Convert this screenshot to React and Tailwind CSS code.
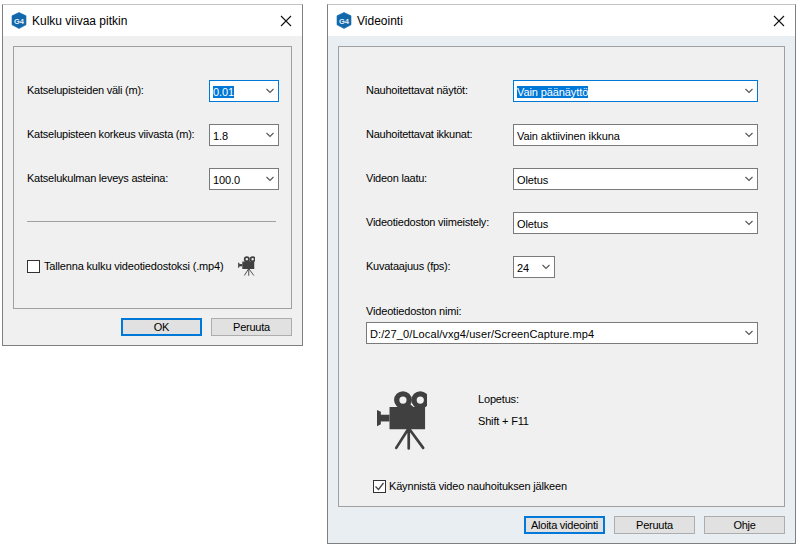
const font = { fontFamily: '"Liberation Sans", Arial, sans-serif' };

function G4Icon() {
  return (
    <svg width="16" height="17" viewBox="0 0 16 17" className="shrink-0">
      <polygon points="8,0.5 15,3.8 15,12.8 8,16.5 1,12.8 1,3.8" fill="#1268ab" stroke="#1268ab" strokeWidth="0.6" strokeLinejoin="round" />
      <text x="8" y="11.5" textAnchor="middle" fontSize="7.5" fontWeight="700" fill="#e8eef2" fontFamily="Liberation Sans">G4</text>
    </svg>
  );
}

function CloseIcon() {
  return (
    <svg width="12" height="12" viewBox="0 0 12 12" fill="none" stroke="#111" strokeWidth="1.1">
      <path d="M1 1l10 10M11 1L1 11" />
    </svg>
  );
}

function Chevron() {
  return (
    <svg width="8" height="6" viewBox="0 0 8 6" fill="none" stroke="#555" strokeWidth="1.1" className="shrink-0">
      <path d="M0.5 1l3.5 3.5L7.5 1" />
    </svg>
  );
}

function Camera({ className }) {
  return (
    <svg viewBox="17 19 52 62" className={className} fill="#404040">
      <circle cx="44" cy="28.7" r="6.5" fill="none" stroke="#404040" strokeWidth="5.5" />
      <circle cx="62" cy="28.7" r="6.5" fill="none" stroke="#404040" strokeWidth="5.5" />
      <path d="M30 36h18l3.5-3 3.5 3h12v23H30z" />
      <path d="M20 44h10v7H20z" />
      <path d="M17 39l4 2v13l-4 2z" />
      <path d="M50 58L37 78.5M50 58v21M50 58l15 20.5" fill="none" stroke="#404040" strokeWidth="2.8" strokeLinecap="round" />
    </svg>
  );
}

function Combo({ value, width, focused, selected, valueClass }) {
  return (
    <div className={`flex h-[22px] ${width} shrink-0 items-center border bg-white pl-[3px] pr-[4px] ${focused ? "border-[#0078d7]" : "border-[#7a7a7a]"}`}>
      <span className={`flex-1 truncate pt-[1px] text-[11px] leading-[16px] ${valueClass || "tracking-[-0.1px]"}`}>
        <span className={selected ? "bg-[#0078d7] text-white" : ""}>{value}</span>
      </span>
      <Chevron />
    </div>
  );
}

function Row({ label, labelClass, className, children }) {
  return (
    <div className={`flex items-center ${className || ""}`}>
      <span className={`-mt-[2px] whitespace-nowrap text-[11px] leading-[16px] tracking-[-0.24px] ${labelClass || ""}`}>{label}</span>
      {children}
    </div>
  );
}

function Btn({ label, primary }) {
  return (
    <div className={`flex h-[18px] w-[81px] items-center justify-center whitespace-nowrap text-[11px] leading-none tracking-[-0.25px] ${primary ? "border-2 border-[#0078d7] bg-[#e1e1e1]" : "border border-[#adadad] bg-[#e1e1e1]"}`}>
      {label}
    </div>
  );
}

function Dialog({ title, className, frameClass, children, buttons }) {
  return (
    <div className={`absolute flex flex-col border border-[#7f7f7f] border-t-[#c4c4c4] ${frameClass} ${className}`}>
      <div className="flex h-[31px] shrink-0 items-center bg-white pl-[8px] pr-[10px]">
        <G4Icon />
        <span className="ml-[5px] flex-1 text-[12px]">{title}</span>
        <CloseIcon />
      </div>
      <div className="flex min-h-0 flex-1 flex-col px-[10px] pt-[10px]">
        <div className="min-h-0 flex-1 border border-[#a0a0a0] bg-[#f0f0f0]">{children}</div>
        <div className="flex h-[36px] shrink-0 items-center justify-end gap-[9px]">
          {buttons.map((b, i) => (
            <Btn key={b} label={b} primary={i === 0} />
          ))}
        </div>
      </div>
    </div>
  );
}

export default function App() {
  return (
    <div className="relative h-[547px] w-[799px] overflow-hidden bg-white text-black" style={font}>
      <Dialog title="Kulku viivaa pitkin" className="left-[2px] top-[4px] h-[342px] w-[301px]" frameClass="bg-[#f0f0f0]" buttons={["OK", "Peruuta"]}>
        <div className="flex flex-col pl-[13px] pr-[12px] pt-[33px]">
          <Row label="Katselupisteiden väli (m):" className="justify-between">
            <Combo value="0.01" width="w-[70px]" focused selected />
          </Row>
          <Row label="Katselupisteen korkeus viivasta (m):" className="mt-[22px] justify-between">
            <Combo value="1.8" width="w-[70px]" />
          </Row>
          <Row label="Katselukulman leveys asteina:" className="mt-[22px] justify-between">
            <Combo value="100.0" width="w-[70px]" />
          </Row>
          <div className="mt-[31px] h-px w-[249px] bg-[#a0a0a0]" />
          <div className="mt-[34px] flex items-center">
            <span className="h-[13px] w-[13px] shrink-0 border border-[#333] bg-white" />
            <span className="ml-[4px] w-[194px] whitespace-nowrap text-[11px] leading-[16px] tracking-[-0.17px]">Tallenna kulku videotiedostoksi (.mp4)</span>
            <Camera className="h-[20px] w-[17px]" />
          </div>
        </div>
      </Dialog>

      <Dialog title="Videointi" className="left-[327px] top-[4px] h-[540px] w-[469px]" frameClass="bg-[#e9eef2]" buttons={["Aloita videointi", "Peruuta", "Ohje"]}>
        <div className="flex flex-col pl-[27px] pr-[26px] pt-[33px]">
          <Row label="Nauhoitettavat näytöt:" labelClass="w-[147px]">
            <Combo value="Vain päänäyttö" width="w-[245px]" focused selected />
          </Row>
          <Row label="Nauhoitettavat ikkunat:" labelClass="w-[147px]" className="mt-[22px]">
            <Combo value="Vain aktiivinen ikkuna" width="w-[245px]" />
          </Row>
          <Row label="Videon laatu:" labelClass="w-[147px]" className="mt-[22px]">
            <Combo value="Oletus" width="w-[245px]" />
          </Row>
          <Row label="Videotiedoston viimeistely:" labelClass="w-[147px]" className="mt-[22px]">
            <Combo value="Oletus" width="w-[245px]" />
          </Row>
          <Row label="Kuvataajuus (fps):" labelClass="w-[147px]" className="mt-[22px]">
            <Combo value="24" width="w-[42px]" />
          </Row>
          <div className="mt-[25px] text-[11px] leading-[16px] tracking-[-0.17px]">Videotiedoston nimi:</div>
          <div className="mt-[3px]">
            <Combo value="D:/27_0/Local/vxg4/user/ScreenCapture.mp4" width="w-full" valueClass="tracking-[0.1px]" />
          </div>
          <div className="mt-[46px] flex">
            <Camera className="ml-[11px] h-[61px] w-[50px]" />
            <div className="ml-[51px] pt-[1px] text-[11px] leading-[16px] tracking-[-0.17px]">
              <div>Lopetus:</div>
              <div className="mt-[6px]">Shift + F11</div>
            </div>
          </div>
          <div className="mt-[27px] ml-[7px] flex items-center">
            <span className="flex h-[13px] w-[13px] shrink-0 items-center justify-center border border-[#333] bg-white">
              <svg width="11" height="11" viewBox="0 0 11 11" fill="none" stroke="#444" strokeWidth="1.3">
                <path d="M1.5 5.5l3 3 5-6.5" />
              </svg>
            </span>
            <span className="ml-[3px] whitespace-nowrap text-[11px] leading-[16px] tracking-[-0.17px]">Käynnistä video nauhoituksen jälkeen</span>
          </div>
        </div>
      </Dialog>
    </div>
  );
}
